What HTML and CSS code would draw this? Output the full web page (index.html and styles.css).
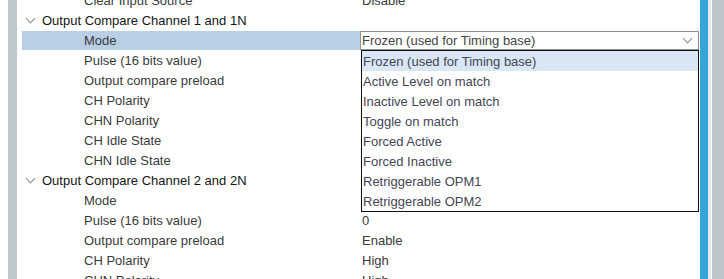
FILE: index.html
```html
<!DOCTYPE html>
<html lang="en">
<head>
  <meta charset="UTF-8" />
  <title>Parameter Settings</title>
  <link rel="stylesheet" href="styles.css">
</head>
<body>
  <div class="frame">
    <div class="gutter"></div>
    <div class="tree">
      <div class="row"><div class="label sub">Clear Input Source</div><div class="value">Disable</div></div>
      <div class="row group"><div class="label"><span class="chev"></span>Output Compare Channel 1 and 1N</div><div class="value"></div></div>
      <div class="row selected">
        <div class="label sub">Mode</div>
        <div class="value">
          <div class="combo">
            <span>Frozen (used for Timing base)</span>
            <span class="arrow"></span>
          </div>
        </div>
      </div>
      <div class="row"><div class="label sub">Pulse (16 bits value)</div><div class="value"></div></div>
      <div class="row"><div class="label sub">Output compare preload</div><div class="value"></div></div>
      <div class="row"><div class="label sub">CH Polarity</div><div class="value"></div></div>
      <div class="row"><div class="label sub">CHN Polarity</div><div class="value"></div></div>
      <div class="row"><div class="label sub">CH Idle State</div><div class="value"></div></div>
      <div class="row"><div class="label sub">CHN Idle State</div><div class="value"></div></div>
      <div class="row group"><div class="label"><span class="chev"></span>Output Compare Channel 2 and 2N</div><div class="value"></div></div>
      <div class="row"><div class="label sub">Mode</div><div class="value"></div></div>
      <div class="row"><div class="label sub">Pulse (16 bits value)</div><div class="value">0</div></div>
      <div class="row"><div class="label sub">Output compare preload</div><div class="value">Enable</div></div>
      <div class="row"><div class="label sub">CH Polarity</div><div class="value">High</div></div>
      <div class="row"><div class="label sub">CHN Polarity</div><div class="value">High</div></div>

      <ul class="dropdown">
        <li class="active">Frozen (used for Timing base)</li>
        <li>Active Level on match</li>
        <li>Inactive Level on match</li>
        <li>Toggle on match</li>
        <li>Forced Active</li>
        <li>Forced Inactive</li>
        <li>Retriggerable OPM1</li>
        <li>Retriggerable OPM2</li>
      </ul>
    </div>
    <div class="scroll"></div>
    <div class="edge"></div>
  </div>
</body>
</html>
```

FILE: styles.css
```css
body {
  margin: 0;
  font-family: "Liberation Sans", Arial, sans-serif;
  font-size: 13px;
  background: #fff;
  overflow: hidden;
}
.frame {
  display: flex;
  height: 279px;
  padding-left: 8px;
}
.gutter {
  width: 9px;
  background: #bcc7ce;
}
.tree {
  position: relative;
  flex: 1;
  overflow: hidden;
}
.row {
  display: grid;
  grid-template-columns: 343px 1fr;
  height: 20px;
  line-height: 21px;
  color: #3a3a3a;
  white-space: nowrap;
}
.row:first-child {
  margin-top: -10px;
}
.label {
  padding-left: 25px;
}
.label.sub {
  padding-left: 67px;
}
.group .label {
  color: #141414;
  padding-left: 10px;
  display: flex;
  align-items: center;
}
.chev {
  width: 6px;
  height: 6px;
  border-right: 1px solid #8c8c8c;
  border-bottom: 1px solid #8c8c8c;
  transform: rotate(45deg);
  margin: -4px 8px 0 0;
}
.value {
  padding-left: 2px;
  color: #3a3a3a;
}
.selected .label {
  background: #b8cfe5;
  margin: 1px 0 0 5px;
  padding-left: 62px;
  height: 19px;
  line-height: 19px;
}
.selected .value {
  padding-left: 0;
}
.combo {
  display: flex;
  justify-content: space-between;
  align-items: center;
  height: 17px;
  margin: 1px 1px 0 0;
  border: 1px solid #8f8f8f;
  padding-left: 1px;
  line-height: 17px;
  color: #444;
}
.arrow {
  width: 6px;
  height: 6px;
  border-right: 1px solid #8c8c8c;
  border-bottom: 1px solid #8c8c8c;
  transform: rotate(45deg);
  margin: -5px 7px 0 0;
}
.dropdown {
  position: absolute;
  top: 50px;
  left: 344px;
  width: 336px;
  margin: 0;
  padding: 0;
  list-style: none;
  border: 1px solid #111;
  background: #fff;
}
.dropdown li {
  height: 20px;
  line-height: 21px;
  padding-left: 1px;
  color: #454555;
}
.dropdown li.active {
  background: #d9e7f5;
}
.scroll {
  width: 8px;
  background: #36a5dc;
}
.edge {
  width: 16px;
  background: linear-gradient(to right, #e6eaec 0 3px, #fff 3px 4px, #bcc5cc 4px);
}
```
